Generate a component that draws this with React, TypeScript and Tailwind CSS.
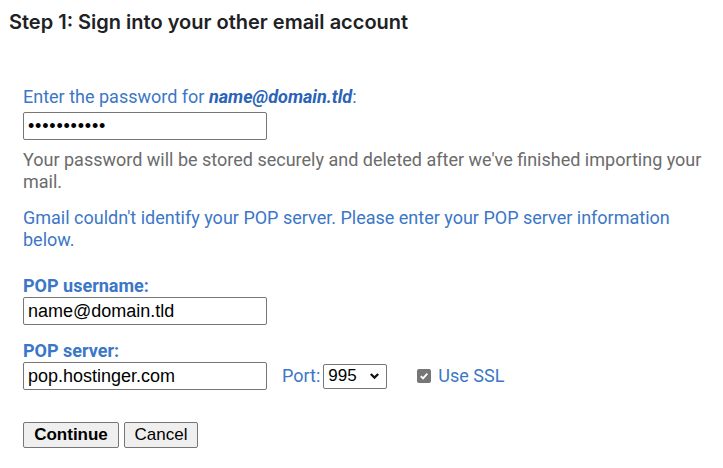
import React from "react";

function ChevronDown() {
  return (
    <svg width="11" height="8" viewBox="0 0 11 8" className="block">
      <path d="M1.8 2 L5.5 5.6 L9.2 2" fill="none" stroke="#111" strokeWidth="2.2" />
    </svg>
  );
}

function CheckedBox() {
  return (
    <span className="inline-flex h-[14px] w-[14px] items-center justify-center rounded-[2px] bg-[#767676]">
      <svg width="10" height="10" viewBox="0 0 10 10">
        <path d="M1.8 5.2 L4 7.4 L8.3 2.6" fill="none" stroke="#fff" strokeWidth="1.8" />
      </svg>
    </span>
  );
}

function TextBox({ value, type = "text" }: { value: string; type?: string }) {
  return (
    <input
      type={type}
      readOnly
      value={value}
      className={
        type === "password"
          ? "block h-[28px] w-[244px] border border-[#767676] rounded-[2px] bg-white px-[4px] font-['Liberation_Sans',Arial,sans-serif] text-[18px] tracking-[0.8px] text-black outline-none"
          : "block h-[28px] w-[244px] border border-[#767676] rounded-[2px] bg-white px-[4px] font-['Liberation_Sans',Arial,sans-serif] text-[18px] text-black outline-none"
      }
    />
  );
}

export default function App() {
  return (
    <div className="h-[468px] w-[723px] bg-white font-['Roboto',sans-serif] text-[18px] leading-[22px]">
      <h2 className="pl-[9px] pt-[10px] font-['Inter',sans-serif] text-[20px] font-semibold leading-[24px] text-[#202124]">
        Step 1: Sign into your other email account
      </h2>

      <div className="pl-[23px] pt-[52px]">
        <p className="text-[#3b77c6]">
          Enter the password for <b className="font-bold italic text-[#2a63b8]">name@domain.tld</b>:
        </p>
        <div className="mt-[4px]">
          <TextBox type="password" value="abcdefghijk" />
        </div>

        <p className="mt-[9px] text-[#6b6b6b]">
          Your password will be stored securely and deleted after we've finished importing your
          <br />
          mail.
        </p>

        <p className="mt-[14px] text-[#3b77c6]">
          Gmail couldn't identify your POP server. Please enter your POP server information
          <br />
          below.
        </p>

        <p className="mt-[24px] font-bold text-[#3b77c6]">POP username:</p>
        <div>
          <TextBox value="name@domain.tld" />
        </div>

        <p className="mt-[15px] font-bold text-[#3b77c6]">POP server:</p>
        <div className="flex items-center">
          <TextBox value="pop.hostinger.com" />
          <span className="ml-[15px] text-[#3b77c6]">Port:</span>
          <div className="ml-[3px] flex h-[25px] w-[64px] items-center justify-between rounded-[2px] border border-[#767676] pl-[4px] pr-[6px] font-['Liberation_Sans',Arial,sans-serif] text-[17px] text-black">
            <span>995</span>
            <ChevronDown />
          </div>
          <label className="ml-[30px] flex items-center gap-[7px] text-[#3b77c6]">
            <CheckedBox />
            Use SSL
          </label>
        </div>

        <div className="mt-[32px] flex gap-[5px] font-['Liberation_Sans',Arial,sans-serif] text-[17px]">
          <button className="h-[26px] w-[96px] rounded-[2px] border border-[#767676] bg-[#efefef] font-bold text-black">
            Continue
          </button>
          <button className="h-[26px] w-[74px] rounded-[2px] border border-[#767676] bg-[#efefef] text-black">
            Cancel
          </button>
        </div>
      </div>
    </div>
  );
}
